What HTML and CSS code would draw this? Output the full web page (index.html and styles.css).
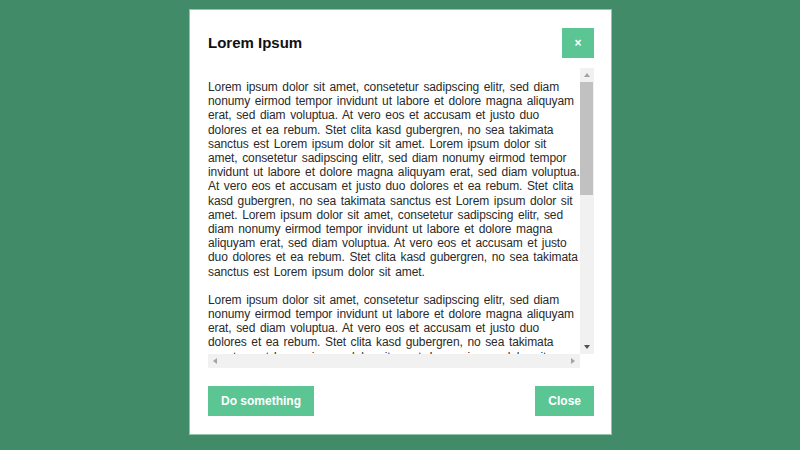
FILE: index.html
```html
<!DOCTYPE html>
<html>
<head>
<meta charset="utf-8">
<link rel="stylesheet" href="styles.css">
</head>
<body>
<div class="page">
  <div class="modal">
    <div class="modal-header">
      <h2 class="modal-title">Lorem Ipsum</h2>
      <button class="btn btn-x">&#215;</button>
    </div>
    <div class="scroller">
      <div class="modal-body">
        <p>Lorem ipsum dolor sit amet, consetetur sadipscing elitr, sed diam nonumy eirmod tempor invidunt ut labore et dolore magna aliquyam erat, sed diam voluptua. At vero eos et accusam et justo duo dolores et ea rebum. Stet clita kasd gubergren, no sea takimata sanctus est Lorem ipsum dolor sit amet. Lorem ipsum dolor sit amet, consetetur sadipscing elitr, sed diam nonumy eirmod tempor invidunt ut labore et dolore magna aliquyam erat, sed diam voluptua. At vero eos et accusam et justo duo dolores et ea rebum. Stet clita kasd gubergren, no sea takimata sanctus est Lorem ipsum dolor sit amet. Lorem ipsum dolor sit amet, consetetur sadipscing elitr, sed diam nonumy eirmod tempor invidunt ut labore et dolore magna aliquyam erat, sed diam voluptua. At vero eos et accusam et justo duo dolores et ea rebum. Stet clita kasd gubergren, no sea takimata sanctus est Lorem ipsum dolor sit amet.</p>
        <p>Lorem ipsum dolor sit amet, consetetur sadipscing elitr, sed diam nonumy eirmod tempor invidunt ut labore et dolore magna aliquyam erat, sed diam voluptua. At vero eos et accusam et justo duo dolores et ea rebum. Stet clita kasd gubergren, no sea takimata sanctus est Lorem ipsum dolor sit amet. Lorem ipsum dolor sit amet, consetetur sadipscing elitr, sed diam nonumy eirmod tempor invidunt ut labore et dolore magna aliquyam erat, sed diam voluptua. At vero eos et accusam et justo duo dolores et ea rebum. Stet clita kasd gubergren, no sea takimata sanctus est Lorem ipsum dolor sit amet. Lorem ipsum dolor sit amet, consetetur sadipscing elitr, sed diam nonumy eirmod tempor invidunt ut labore et dolore magna aliquyam erat, sed diam voluptua. At vero eos et accusam et justo duo dolores et ea rebum. Stet clita kasd gubergren, no sea takimata sanctus est Lorem ipsum dolor sit amet.</p>
      </div>
      <div class="vbar">
        <div class="sb-btn"><span class="arrow up"></span></div>
        <div class="vtrack"><div class="vthumb"></div></div>
        <div class="sb-btn"><span class="arrow down"></span></div>
      </div>
      <div class="hbar">
        <div class="sb-btn"><span class="arrow left"></span></div>
        <div class="htrack"></div>
        <div class="sb-btn"><span class="arrow right"></span></div>
      </div>
      <div class="corner"></div>
    </div>
    <div class="modal-footer">
      <button class="btn">Do something</button>
      <button class="btn">Close</button>
    </div>
  </div>
</div>
</body>
</html>
```

FILE: styles.css
```css
html, body {
  margin: 0;
  padding: 0;
  height: 100%;
}
body {
  background: #428b68;
  font-family: "Liberation Sans", Arial, sans-serif;
}
.page {
  display: flex;
  justify-content: center;
  padding-top: 10px;
}
.modal {
  width: 386px;
  margin-left: 1px;
  background: #fff;
  padding: 18px 17px 18px 18px;
  box-shadow: 0 0 0 1px rgba(200, 235, 215, 0.6);
}
.modal-header {
  display: flex;
  justify-content: space-between;
  align-items: center;
  height: 30px;
  margin-bottom: 10px;
}
.modal-title {
  margin: 0;
  margin-top: -1px;
  font-size: 15px;
  font-weight: bold;
  color: #111;
}
.btn {
  border: 0;
  background: #5cc594;
  color: #fff;
  font-family: "Liberation Sans", Arial, sans-serif;
  font-weight: bold;
  font-size: 12px;
  height: 30px;
  padding: 0 13px;
  cursor: pointer;
}
.btn-x {
  width: 32px;
  padding: 0;
  font-size: 12px;
}
.scroller {
  display: grid;
  grid-template-columns: 372px 14px;
  grid-template-rows: 286px 14px;
}
.modal-body {
  overflow: hidden;
  font-size: 12px;
  line-height: 14.2px;
  letter-spacing: -0.104px;
  word-spacing: 1.446px;
  color: #2a2a2a;
}
.modal-body p {
  margin: 0 0 14px;
}
.modal-body p:first-child {
  margin-top: 12px;
}
.vbar {
  display: flex;
  flex-direction: column;
  background: #f1f1f1;
}
.hbar {
  display: flex;
  background: #f1f1f1;
}
.corner {
  background: #fff;
}
.sb-btn {
  width: 14px;
  height: 14px;
  flex: none;
  display: flex;
  align-items: center;
  justify-content: center;
}
.vtrack {
  flex: 1;
  padding: 0 1px 0 0;
}
.vthumb {
  height: 113px;
  background: #c1c1c1;
}
.htrack {
  flex: 1;
}
.arrow {
  width: 0;
  height: 0;
  border-style: solid;
  border-color: transparent;
}
.arrow.up {
  border-width: 0 3.5px 4px;
  border-bottom-color: #a3a3a3;
}
.arrow.down {
  border-width: 4px 3.5px 0;
  border-top-color: #505050;
}
.arrow.left {
  border-width: 3.5px 4px 3.5px 0;
  border-right-color: #a3a3a3;
}
.arrow.right {
  border-width: 3.5px 0 3.5px 4px;
  border-left-color: #a3a3a3;
}
.modal-footer {
  display: flex;
  justify-content: space-between;
  margin-top: 18px;
}
```
